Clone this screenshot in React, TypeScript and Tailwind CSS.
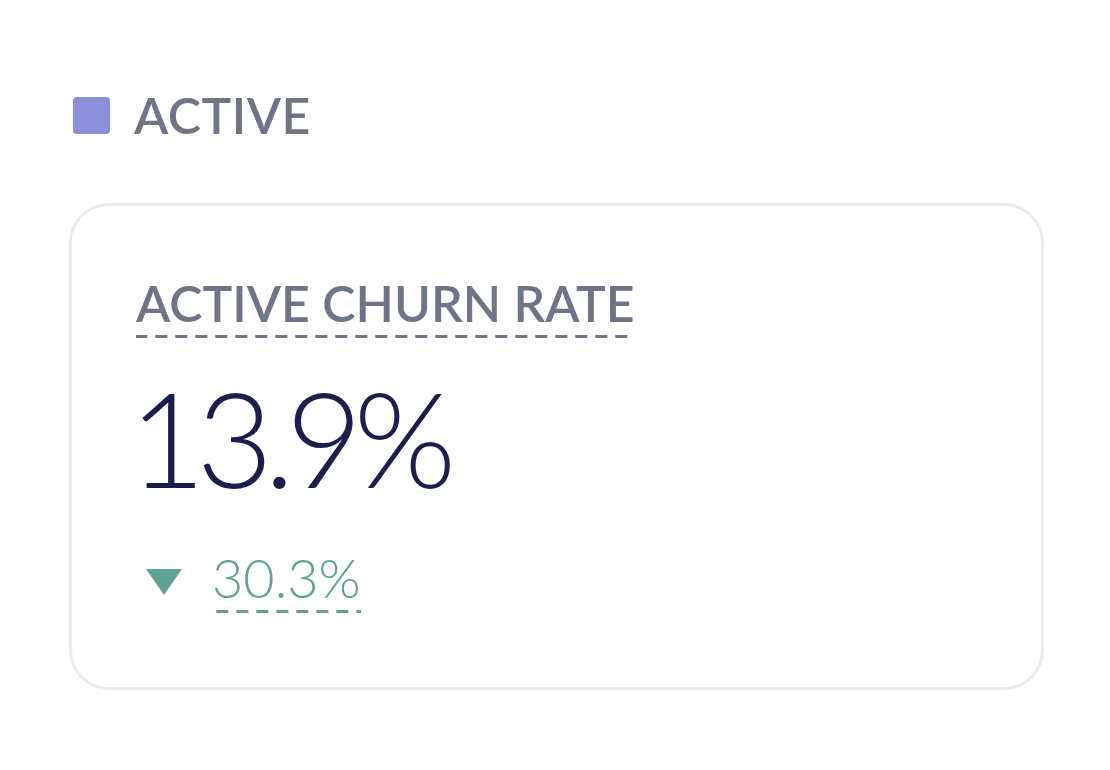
import React from "react";

const dashGray =
  "bg-[linear-gradient(to_right,#6f7587_12px,transparent_12px)] bg-[length:20px_3px] bg-repeat-x bg-bottom";
const dashTeal =
  "bg-[linear-gradient(to_right,#5ea394_12px,transparent_12px)] bg-[length:20px_3px] bg-repeat-x bg-bottom";

export default function App() {
  return (
    <div
      className="w-[1110px] h-[770px] bg-white pl-[69px] pt-[88px]"
      style={{ fontFamily: "Lato, 'Noto Sans', sans-serif" }}
    >
      <div className="flex items-center gap-[24px] ml-[4px] h-[54px]">
        <div className="w-[37px] h-[37px] rounded-[4px] bg-[#8b8fd8]" />
        <span className="text-[50px] leading-none font-semibold text-[#6f7587] tracking-[0.5px]">
          ACTIVE
        </span>
      </div>
      <div className="mt-[61px] w-[975px] h-[487px] rounded-[40px] border-[3px] border-[#ebebeb] pl-[64px] pt-[72px]">
        <div className="inline-block">
          <div className={`${dashGray} pb-[10px]`}>
            <span className="text-[50px] leading-none font-semibold text-[#6f7587] tracking-[0px]">
              ACTIVE CHURN RATE
            </span>
          </div>
        </div>
        <div className="mt-[33px] -ml-[7px] text-[132px] leading-none font-light text-[#1b1f4e] tracking-[-9px]">
          13.9%
        </div>
        <div className="mt-[48px] flex items-center gap-[30px] pl-[10px]">
          <svg width="36" height="26" viewBox="0 0 36 26">
            <polygon points="0,0 36,0 18,26" fill="#5ea394" />
          </svg>
          <div className={`${dashTeal} pb-[8px]`}>
            <span className="text-[54px] leading-none font-light text-[#5ea394]">
              30.3%
            </span>
          </div>
        </div>
      </div>
    </div>
  );
}
